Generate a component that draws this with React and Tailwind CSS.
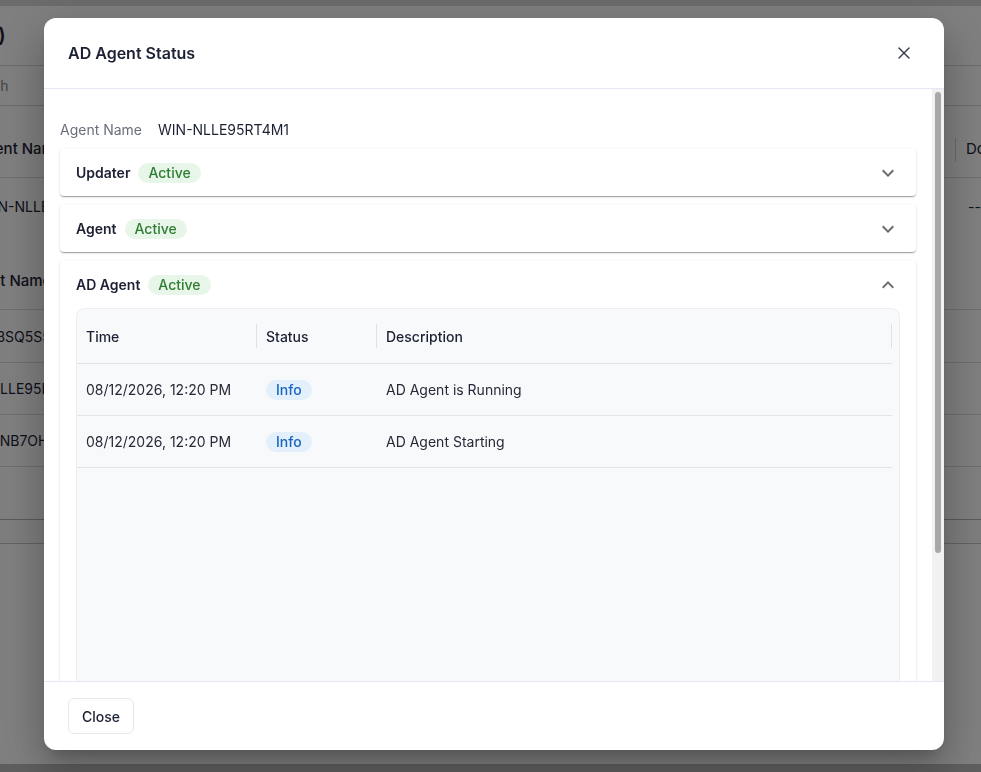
import React from "react";

function ExpandIcon({ up }) {
  return (
    <svg
      viewBox="0 0 24 24"
      className={up ? "ml-auto h-6 w-6 rotate-180 fill-[#6e6e6e]" : "ml-auto h-6 w-6 fill-[#6e6e6e]"}
    >
      <path d="M16.59 8.59 12 13.17 7.41 8.59 6 10l6 6 6-6z" />
    </svg>
  );
}

function CloseIcon() {
  return (
    <svg viewBox="0 0 24 24" className="h-5 w-5" fill="none" stroke="#3b3f52" strokeWidth="1.8" strokeLinecap="round">
      <path d="M18 6 6 18" />
      <path d="m6 6 12 12" />
    </svg>
  );
}

function ActiveBadge() {
  return (
    <span className="ml-2 rounded-full bg-[#e8f5e9] px-[10px] text-[14px] leading-[20px] font-medium text-[#2e7d32]">
      Active
    </span>
  );
}

function Accordion({ title, expanded, children }) {
  return (
    <div className="rounded-[4px] bg-white shadow-[0_2px_1px_-1px_rgba(0,0,0,0.2),0_1px_1px_0_rgba(0,0,0,0.14),0_1px_3px_0_rgba(0,0,0,0.12)]">
      <div className="flex h-[47px] items-center px-4">
        <span className="text-[14px] font-semibold text-[#1c2033]">{title}</span>
        <ActiveBadge />
        <ExpandIcon up={expanded} />
      </div>
      {children}
    </div>
  );
}

function Sep() {
  return <div className="h-6 w-px shrink-0 bg-[#e0e1e6]" />;
}

function Row({ time, desc }) {
  return (
    <div className="flex h-[52px] items-center border-b border-[#e3e4e9] text-[14px] text-[#262a37]">
      <div className="w-[180px] shrink-0 pl-[9px]">{time}</div>
      <div className="w-[120px] shrink-0 pl-[9px]">
        <span className="inline-block rounded-full bg-[#e3f0fc] px-[10px] leading-[20px] font-medium text-[#1565c0]">
          Info
        </span>
      </div>
      <div className="flex-1 pl-[9px]">{desc}</div>
    </div>
  );
}

function BackgroundPage() {
  return (
    <div className="flex h-[772px] flex-col bg-white text-[14px] text-[#1e2235]">
      <div className="h-[6px] bg-[#d8d8d8]" />
      <div className="flex h-[59px] items-center">
        <span className="-ml-[22px] text-[20px] font-semibold">(3)</span>
      </div>
      <div className="flex h-[41px] items-center border-y border-[#d6d6d6]">
        <span className="-ml-[38px] text-[14px] text-[#8a8a8a]">Search</span>
      </div>
      <div className="h-[16px]" />
      <div className="flex h-[56px] items-center border-b border-[#dcdcdc] text-[15px]">
        <span className="-ml-[25px] whitespace-nowrap font-medium">Agent Name</span>
        <div className="ml-auto flex items-center">
          <div className="h-6 w-px bg-[#d0d0d0]" />
          <span className="ml-[10px] w-[15px] overflow-hidden whitespace-nowrap">Do</span>
        </div>
      </div>
      <div className="flex h-[56px] items-center">
        <span className="-ml-[20px] whitespace-nowrap">WIN-NLLE95RT4M1</span>
        <span className="ml-auto w-[13px] overflow-hidden whitespace-nowrap">--</span>
      </div>
      <div className="h-[20px]" />
      <div className="flex h-[56px] items-center border-b border-[#dcdcdc] text-[15px]">
        <span className="-ml-[28px] whitespace-nowrap font-medium">Host Name</span>
      </div>
      <div className="flex h-[53px] items-center border-b border-[#dcdcdc]">
        <span className="-ml-[38px] whitespace-nowrap">WIN-3SQ5S5K1</span>
      </div>
      <div className="flex h-[52px] items-center border-b border-[#dcdcdc]">
        <span className="-ml-[45px] whitespace-nowrap">WIN-NLLE95RT4M1</span>
      </div>
      <div className="flex h-[52px] items-center border-b border-[#dcdcdc]">
        <span className="-ml-[44px] whitespace-nowrap">WIN-ANB7OH2L</span>
      </div>
      <div className="h-[53px] border-b border-[#b4b4b4]" />
      <div className="h-[24px] border-b border-[#c4c4c4] bg-[#fafafa]" />
      <div className="flex-1" />
      <div className="h-[8px] bg-[#bdbdbd]" />
    </div>
  );
}

export default function App() {
  return (
    <div className="relative h-[772px] w-full overflow-hidden font-['Inter',sans-serif]">
      <BackgroundPage />
      <div className="fixed inset-0 bg-black/50" />
      <div className="fixed inset-0 flex items-start pl-[44px] pt-[18px]">
        <div className="flex h-[732px] w-[900px] flex-col overflow-hidden rounded-xl bg-white shadow-[0_11px_15px_-7px_rgba(0,0,0,0.2),0_24px_38px_3px_rgba(0,0,0,0.14),0_9px_46px_8px_rgba(0,0,0,0.12)]">
          <div className="flex h-[71px] shrink-0 items-center justify-between border-b border-[#e6e7f0] px-6">
            <h2 className="text-[16px] font-semibold text-[#1c2033]">AD Agent Status</h2>
            <button className="flex h-8 w-8 items-center justify-center">
              <CloseIcon />
            </button>
          </div>

          <div className="flex h-[592px] shrink-0">
            <div className="min-w-0 flex-1 overflow-hidden">
              <div className="flex flex-col px-4 pt-[30px] pb-4">
                <div className="flex h-5 items-center text-[14px]">
                  <span className="text-[#6b6f7b]">Agent Name</span>
                  <span className="ml-4 text-[#1c2033]">WIN-NLLE95RT4M1</span>
                </div>
                <div className="mt-[10px] flex flex-col gap-[9px]">
                  <Accordion title="Updater" />
                  <Accordion title="Agent" />
                  <Accordion title="AD Agent" expanded>
                    <div className="mx-4 mb-4 h-[500px] rounded-t-lg border border-[#eceef3] bg-[#f8f9fb] pr-[7px]">
                      <div className="flex h-[55px] items-center border-b border-[#e0e2e7] text-[14px] font-medium text-[#1c2033]">
                        <div className="w-[179px] shrink-0 pl-[9px]">Time</div>
                        <Sep />
                        <div className="w-[119px] shrink-0 pl-[9px]">Status</div>
                        <Sep />
                        <div className="flex-1 pl-[9px]">Description</div>
                        <Sep />
                      </div>
                      <Row time="08/12/2026, 12:20 PM" desc="AD Agent is Running" />
                      <Row time="08/12/2026, 12:20 PM" desc="AD Agent Starting" />
                    </div>
                  </Accordion>
                </div>
              </div>
            </div>
            <div className="flex w-[12px] shrink-0 justify-center bg-[#f1f1f1] pt-[3px]">
              <div className="h-[461px] w-[6px] rounded-full bg-[#a8a8a8]" />
            </div>
          </div>

          <div className="flex flex-1 items-center border-t border-[#e6e7f0] px-6">
            <button className="h-9 rounded-md border border-[#e6e8ef] bg-white px-[13px] text-[14px] font-medium text-[#1c2033]">
              Close
            </button>
          </div>
        </div>
      </div>
    </div>
  );
}
